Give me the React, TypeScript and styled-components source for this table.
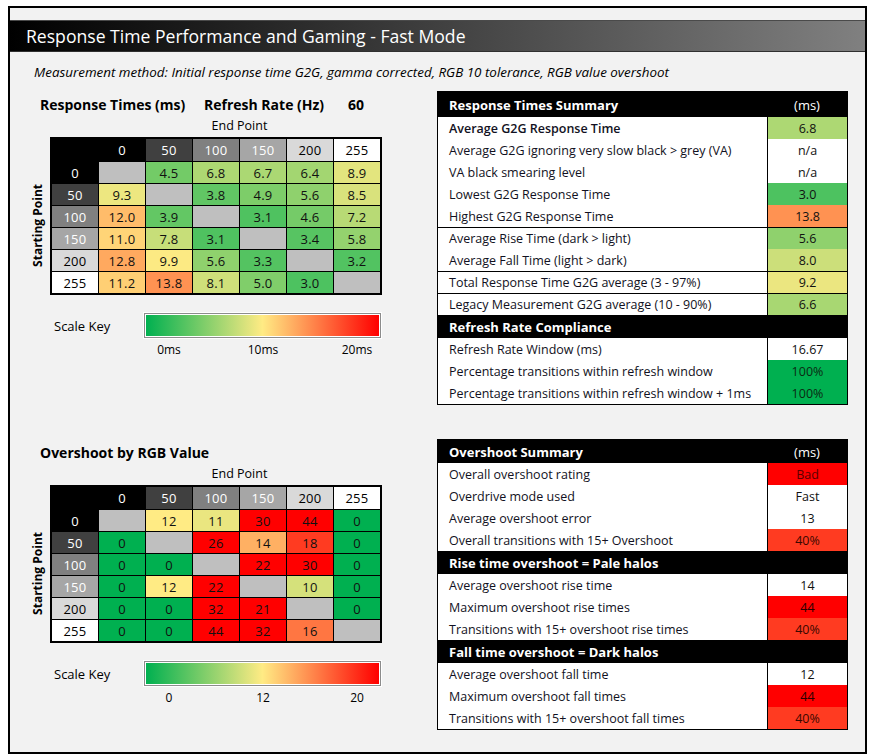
import React from 'react';
import styled, { createGlobalStyle } from 'styled-components';

const FONT = `"Open Sans", "DejaVu Sans", sans-serif`;

const GlobalStyle = createGlobalStyle`
  html, body { margin: 0; padding: 0; background: #ffffff; }
  body { font-family: ${FONT}; color: #000; }
  * { box-sizing: border-box; }
`;

type RGB = [number, number, number];
const GREEN: RGB = [0, 176, 80];
const YELLOW: RGB = [255, 235, 132];
const RED: RGB = [255, 0, 0];

const mix = (a: RGB, b: RGB, t: number) =>
  `rgb(${a.map((v, i) => Math.round(v + (b[i] - v) * t)).join(',')})`;

const scaleColor = (v: number, min: number, mid: number, max: number) => {
  if (v <= min) return mix(GREEN, GREEN, 0);
  if (v >= max) return mix(RED, RED, 0);
  if (v <= mid) return mix(GREEN, YELLOW, (v - min) / (mid - min));
  return mix(YELLOW, RED, (v - mid) / (max - mid));
};

const LEVELS = [0, 50, 100, 150, 200, 255];
const LEVEL_BG: Record<number, string> = {
  0: '#000000',
  50: '#404040',
  100: '#808080',
  150: '#a6a6a6',
  200: '#d9d9d9',
  255: '#ffffff',
};
const LEVEL_FG: Record<number, string> = {
  0: '#ffffff',
  50: '#ffffff',
  100: '#ffffff',
  150: '#ffffff',
  200: '#000000',
  255: '#000000',
};

const RESPONSE: (number | null)[][] = [
  [null, 4.5, 6.8, 6.7, 6.4, 8.9],
  [9.3, null, 3.8, 4.9, 5.6, 8.5],
  [12.0, 3.9, null, 3.1, 4.6, 7.2],
  [11.0, 7.8, 3.1, null, 3.4, 5.8],
  [12.8, 9.9, 5.6, 3.3, null, 3.2],
  [11.2, 13.8, 8.1, 5.0, 3.0, null],
];

const OVERSHOOT: (number | null)[][] = [
  [null, 12, 11, 30, 44, 0],
  [0, null, 26, 14, 18, 0],
  [0, 0, null, 22, 30, 0],
  [0, 12, 22, null, 10, 0],
  [0, 0, 32, 21, null, 0],
  [0, 0, 44, 32, 16, null],
];

/* ---------- frame ---------- */

const Frame = styled.div`
  margin: 6px 0 0 8px;
  width: 859px;
  height: 748px;
  border: 2px solid #000;
  background: #f2f2f2;
  padding-top: 12px;
`;

const TitleBar = styled.div`
  height: 32px;
  display: flex;
  align-items: center;
  padding-left: 16px;
  background: linear-gradient(to right, #000000 0%, #808080 100%);
  border-top: 1px solid #4a4a4a;
  border-bottom: 1px solid #303030;
  color: #ffffff;
  font-size: 17.6px;
`;

const Method = styled.div`
  margin-top: 12px;
  padding-left: 24px;
  height: 16px;
  line-height: 16px;
  font-size: 13.4px;
  font-style: italic;
`;

const Body = styled.div`
  display: grid;
  grid-template-columns: 397px 411px;
  column-gap: 10px;
  row-gap: 34px;
  padding-left: 20px;
  margin-top: 11px;
  align-items: start;
`;

/* ---------- left panel ---------- */

const Panel = styled.div`
  display: flex;
  flex-direction: column;
`;

const HeadingRow = styled.div`
  margin-top: 3px;
  height: 20px;
  display: flex;
  align-items: center;
  padding-left: 10px;
  font-size: 14px;
  font-weight: 700;
`;

const HeadingItem = styled.span<{ $w?: number }>`
  width: ${(p) => (p.$w ? `${p.$w}px` : 'auto')};
  flex: none;
`;

const EndPoint = styled.div`
  margin-top: 3px;
  height: 18px;
  line-height: 18px;
  padding-left: 68px;
  width: 351px;
  text-align: center;
  font-size: 12.5px;
`;

const TableWrap = styled.div`
  margin-top: 2px;
  display: flex;
  align-items: stretch;
`;

const SideLabel = styled.div`
  width: 16px;
  margin-right: 4px;
  padding-top: 18px;
  display: flex;
  align-items: center;
  justify-content: center;
`;

const SideLabelText = styled.span`
  writing-mode: vertical-rl;
  transform: rotate(180deg);
  font-size: 12px;
  font-weight: 700;
  white-space: nowrap;
  line-height: 16px;
`;

const Grid = styled.div`
  display: grid;
  grid-template-columns: repeat(7, 46px);
  grid-template-rows: 22px repeat(6, 21px);
  gap: 1px;
  background: #000;
  border: 2px solid #000;
`;

const Cell = styled.div<{ $bg: string; $fg?: string }>`
  background: ${(p) => p.$bg};
  color: ${(p) => p.$fg || '#111'};
  display: flex;
  align-items: center;
  justify-content: center;
  font-size: 13px;
  letter-spacing: 0.3px;
`;

const ScaleRow = styled.div<{ $top: number }>`
  margin-top: ${(p) => p.$top}px;
  display: flex;
  align-items: center;
`;

const ScaleTitle = styled.div`
  width: 114px;
  padding-left: 24px;
  font-size: 13px;
`;

const ScaleBar = styled.div`
  width: 237px;
  height: 25px;
  padding: 1px;
  background: #ffffff;
  border: 1px solid #8c8c8c;
  box-shadow: 0 0 0 1px #ffffff;
`;

const ScaleFill = styled.div`
  width: 100%;
  height: 100%;
  background: linear-gradient(to right, #00b050 0%, #ffeb84 50%, #ff0000 100%);
`;

const ScaleLabels = styled.div`
  margin-top: 4px;
  padding-left: 92px;
  display: grid;
  grid-template-columns: repeat(3, 94px);
  height: 16px;
  line-height: 16px;
  font-size: 12px;
  text-align: center;
`;

/* ---------- right tables ---------- */

const Summary = styled.div`
  border: 1px solid #000;
  background: #ffffff;
  font-size: 12.5px;
`;

const HeadRow = styled.div<{ $h: number }>`
  height: ${(p) => p.$h}px;
  display: grid;
  grid-template-columns: 329px 1fr;
  align-items: center;
  background: #000;
  color: #ffffff;
  font-weight: 700;
  font-size: 13px;
`;

const HeadLabel = styled.div`
  padding-left: 11px;
`;

const HeadUnit = styled.div`
  text-align: center;
  font-weight: 400;
`;

const Row = styled.div<{ $sep?: boolean }>`
  height: 22px;
  display: grid;
  grid-template-columns: 329px 1fr;
  border-top: ${(p) => (p.$sep ? '1px solid #000' : '0')};
`;

const Label = styled.div<{ $strong?: boolean }>`
  padding-left: 11px;
  display: flex;
  align-items: center;
  font-weight: ${(p) => (p.$strong ? 600 : 400)};
  color: #111122;
`;

const Value = styled.div<{ $bg?: string; $fg?: string }>`
  border-left: 1px solid #000;
  background: ${(p) => p.$bg || '#ffffff'};
  color: ${(p) => p.$fg || '#111'};
  display: flex;
  align-items: center;
  justify-content: center;
  font-size: 12.5px;
`;

/* ---------- components ---------- */

const HeatMap: React.FC<{ data: (number | null)[][]; color: (v: number) => string; fmt: (v: number) => string }> = ({
  data,
  color,
  fmt,
}) => (
  <TableWrap>
    <SideLabel>
      <SideLabelText>Starting Point</SideLabelText>
    </SideLabel>
    <Grid>
      <Cell $bg="#000" />
      {LEVELS.map((l) => (
        <Cell key={`h${l}`} $bg={LEVEL_BG[l]} $fg={LEVEL_FG[l]}>
          {l}
        </Cell>
      ))}
      {data.map((row, ri) => (
        <React.Fragment key={ri}>
          <Cell $bg={LEVEL_BG[LEVELS[ri]]} $fg={LEVEL_FG[LEVELS[ri]]}>
            {LEVELS[ri]}
          </Cell>
          {row.map((v, ci) =>
            v === null ? (
              <Cell key={ci} $bg="#bfbfbf" />
            ) : (
              <Cell key={ci} $bg={color(v)}>
                {fmt(v)}
              </Cell>
            )
          )}
        </React.Fragment>
      ))}
    </Grid>
  </TableWrap>
);

const rt = (v: number) => scaleColor(v, 0, 10, 20);
const os = (v: number) => scaleColor(v, 0, 12, 20);

type SumItem =
  | { kind: 'head'; label: string; unit?: string; h: number }
  | { kind: 'row'; label: string; value: string; bg?: string; fg?: string; sep?: boolean; strong?: boolean };

const RT_SUMMARY: SumItem[] = [
  { kind: 'head', label: 'Response Times Summary', unit: '(ms)', h: 25 },
  { kind: 'row', label: 'Average G2G Response Time', value: '6.8', bg: rt(6.8), strong: true },
  { kind: 'row', label: 'Average G2G ignoring very slow black > grey (VA)', value: 'n/a' },
  { kind: 'row', label: 'VA black smearing level', value: 'n/a' },
  { kind: 'row', label: 'Lowest G2G Response Time', value: '3.0', bg: rt(3.0) },
  { kind: 'row', label: 'Highest G2G Response Time', value: '13.8', bg: rt(13.8) },
  { kind: 'row', label: 'Average Rise Time (dark > light)', value: '5.6', bg: rt(5.6), sep: true },
  { kind: 'row', label: 'Average Fall Time (light > dark)', value: '8.0', bg: rt(8.0) },
  { kind: 'row', label: 'Total Response Time G2G average (3 - 97%)', value: '9.2', bg: rt(9.2), sep: true },
  { kind: 'row', label: 'Legacy Measurement G2G average (10 - 90%)', value: '6.6', bg: rt(6.6), sep: true },
  { kind: 'head', label: 'Refresh Rate Compliance', h: 23 },
  { kind: 'row', label: 'Refresh Rate Window (ms)', value: '16.67' },
  { kind: 'row', label: 'Percentage transitions within refresh window', value: '100%', bg: '#00b050', fg: '#0b2a12' },
  { kind: 'row', label: 'Percentage transitions within refresh window + 1ms', value: '100%', bg: '#00b050', fg: '#0b2a12' },
];

const OS_SUMMARY: SumItem[] = [
  { kind: 'head', label: 'Overshoot Summary', unit: '(ms)', h: 23 },
  { kind: 'row', label: 'Overall overshoot rating', value: 'Bad', bg: '#ff0000', fg: '#5a0000' },
  { kind: 'row', label: 'Overdrive mode used', value: 'Fast' },
  { kind: 'row', label: 'Average overshoot error', value: '13' },
  { kind: 'row', label: 'Overall transitions with 15+ Overshoot', value: '40%', bg: '#ff3b21', fg: '#3a0800' },
  { kind: 'head', label: 'Rise time overshoot = Pale halos', h: 23 },
  { kind: 'row', label: 'Average overshoot rise time', value: '14' },
  { kind: 'row', label: 'Maximum overshoot rise times', value: '44', bg: '#ff0000', fg: '#2a0000' },
  { kind: 'row', label: 'Transitions with 15+ overshoot rise times', value: '40%', bg: '#ff3b21', fg: '#3a0800' },
  { kind: 'head', label: 'Fall time overshoot = Dark halos', h: 23 },
  { kind: 'row', label: 'Average overshoot fall time', value: '12' },
  { kind: 'row', label: 'Maximum overshoot fall times', value: '44', bg: '#ff0000', fg: '#2a0000' },
  { kind: 'row', label: 'Transitions with 15+ overshoot fall times', value: '40%', bg: '#ff3b21', fg: '#3a0800' },
];

const SummaryTable: React.FC<{ items: SumItem[] }> = ({ items }) => (
  <Summary>
    {items.map((it, i) =>
      it.kind === 'head' ? (
        <HeadRow key={i} $h={it.h}>
          <HeadLabel>{it.label}</HeadLabel>
          <HeadUnit>{it.unit || ''}</HeadUnit>
        </HeadRow>
      ) : (
        <Row key={i} $sep={it.sep}>
          <Label $strong={it.strong}>{it.label}</Label>
          <Value $bg={it.bg} $fg={it.fg}>
            {it.value}
          </Value>
        </Row>
      )
    )}
  </Summary>
);

const App: React.FC = () => (
  <>
    <GlobalStyle />
    <Frame>
      <TitleBar>Response Time Performance and Gaming - Fast Mode</TitleBar>
      <Method>Measurement method: Initial response time G2G, gamma corrected, RGB 10 tolerance, RGB value overshoot</Method>
      <Body>
        <Panel>
          <HeadingRow>
            <HeadingItem $w={164}>Response Times (ms)</HeadingItem>
            <HeadingItem $w={144}>Refresh Rate (Hz)</HeadingItem>
            <HeadingItem>60</HeadingItem>
          </HeadingRow>
          <EndPoint>End Point</EndPoint>
          <HeatMap data={RESPONSE} color={rt} fmt={(v) => v.toFixed(1)} />
          <ScaleRow $top={18}>
            <ScaleTitle>Scale Key</ScaleTitle>
            <ScaleBar>
              <ScaleFill />
            </ScaleBar>
          </ScaleRow>
          <ScaleLabels>
            <span>0ms</span>
            <span>10ms</span>
            <span>20ms</span>
          </ScaleLabels>
        </Panel>
        <SummaryTable items={RT_SUMMARY} />
        <Panel>
          <HeadingRow>
            <HeadingItem>Overshoot by RGB Value</HeadingItem>
          </HeadingRow>
          <EndPoint>End Point</EndPoint>
          <HeatMap data={OVERSHOOT} color={os} fmt={(v) => String(v)} />
          <ScaleRow $top={18}>
            <ScaleTitle>Scale Key</ScaleTitle>
            <ScaleBar>
              <ScaleFill />
            </ScaleBar>
          </ScaleRow>
          <ScaleLabels>
            <span>0</span>
            <span>12</span>
            <span>20</span>
          </ScaleLabels>
        </Panel>
        <SummaryTable items={OS_SUMMARY} />
      </Body>
    </Frame>
  </>
);

export default App;
